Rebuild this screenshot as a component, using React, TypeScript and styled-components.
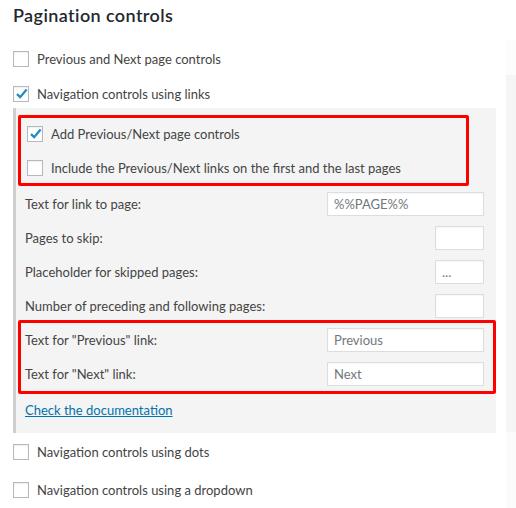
import React, { FC } from 'react';
import styled, { createGlobalStyle } from 'styled-components';

const GlobalStyle = createGlobalStyle`
  body {
    margin: 0;
    background: #ffffff;
    font-family: Lato, "Noto Sans", sans-serif;
    font-size: 13px;
    color: #444444;
  }
`;

const Page = styled.div`
  display: flex;
  width: 516px;
  height: 508px;
  overflow: hidden;
`;

const Main = styled.div`
  width: 483px;
  padding-left: 13px;
  flex-shrink: 0;
`;

const Title = styled.h2`
  margin: 0;
  padding-top: 4px;
  height: 40px;
  box-sizing: border-box;
  font-size: 18px;
  letter-spacing: 0.4px;
  line-height: 22px;
  font-weight: 600;
  color: #23282d;
`;

const OptionRow = styled.label<{ $height?: number }>`
  display: flex;
  align-items: center;
  gap: 8px;
  height: ${(p) => p.$height ?? 24}px;
  line-height: 18px;
  color: #444444;
`;

const TopOptions = styled.div`
  display: flex;
  flex-direction: column;
  gap: 11px;
  padding-top: 7px;
`;

const Box = styled.span`
  position: relative;
  width: 16px;
  height: 16px;
  box-sizing: border-box;
  border: 1px solid #b4b9be;
  background: #ffffff;
  box-shadow: inset 0 1px 2px rgba(0, 0, 0, 0.07);
  flex-shrink: 0;
`;

const Tick = styled.svg`
  position: absolute;
  left: 0;
  top: -1px;
`;

const Checkbox: FC<{ checked?: boolean }> = ({ checked }) => (
  <Box>
    {checked && (
      <Tick width="16" height="16" viewBox="0 0 16 16">
        <path d="M3 8.2 L6.2 11.2 L12.6 3.6" fill="none" stroke="#1e8cbe" strokeWidth="2.3" />
      </Tick>
    )}
  </Box>
);

const Panel = styled.div`
  margin-top: 2px;
  background: #f4f4f4;
  border-left: 3px solid #cfcfcf;
  padding: 7px 0 14px 2px;
`;

const Highlight = styled.div<{ $width?: number }>`
  border: 3px solid #ff0000;
  border-radius: 2px;
  width: ${(p) => (p.$width ? `${p.$width}px` : 'auto')};
  box-sizing: border-box;
`;

const CheckGroup = styled.div`
  display: flex;
  flex-direction: column;
  gap: 3px;
  padding: 0 6px;
`;

const Fields = styled.div<{ $pad: string }>`
  display: flex;
  flex-direction: column;
  gap: 10px;
  padding: ${(p) => p.$pad};
`;

const FieldRow = styled.div`
  display: flex;
  align-items: center;
  justify-content: space-between;
  height: 24px;
  color: #444444;
`;

const Input = styled.div<{ $width: number }>`
  width: ${(p) => p.$width}px;
  height: 24px;
  box-sizing: border-box;
  border: 1px solid #dddddd;
  background: #ffffff;
  box-shadow: inset 0 1px 2px rgba(0, 0, 0, 0.04);
  padding: 0 6px;
  line-height: 22px;
  font-size: 13px;
  color: #72777c;
`;

const DocLink = styled.a`
  display: block;
  margin: 7px 0 0 7px;
  line-height: 18px;
  color: #0073aa;
  text-decoration: underline;
`;

const BottomOptions = styled.div`
  display: flex;
  flex-direction: column;
`;

const Side = styled.div`
  margin-left: 10px;
  margin-top: 40px;
  flex: 1;
  display: flex;
  flex-direction: column;
`;

const SideHead = styled.div`
  height: 35px;
  background: #fcfcfc;
`;

const SideBody = styled.div`
  height: 357px;
  background: #f5f5f5;
`;

const SideFoot = styled.div`
  flex: 1;
  background: #fbfbfb;
`;

const fields = [
  { label: 'Text for link to page:', value: '%%PAGE%%', width: 157 },
  { label: 'Pages to skip:', value: '', width: 49 },
  { label: 'Placeholder for skipped pages:', value: '...', width: 49 },
  { label: 'Number of preceding and following pages:', value: '', width: 49 }
];

const linkFields = [
  { label: 'Text for "Previous" link:', value: 'Previous' },
  { label: 'Text for "Next" link:', value: 'Next' }
];

export default function App() {
  return (
    <Page>
      <GlobalStyle />
      <Main>
        <Title>Pagination controls</Title>
        <TopOptions>
          <OptionRow>
            <Checkbox />
            Previous and Next page controls
          </OptionRow>
          <OptionRow>
            <Checkbox checked />
            Navigation controls using links
          </OptionRow>
        </TopOptions>
        <Panel>
          <Highlight $width={451}>
            <CheckGroup>
              <OptionRow $height={31}>
                <Checkbox checked />
                Add Previous/Next page controls
              </OptionRow>
              <OptionRow $height={31}>
                <Checkbox />
                Include the Previous/Next links on the first and the last pages
              </OptionRow>
            </CheckGroup>
          </Highlight>
          <Fields $pad="6px 12px 2px 7px">
            {fields.map((f) => (
              <FieldRow key={f.label}>
                <span>{f.label}</span>
                <Input $width={f.width}>{f.value}</Input>
              </FieldRow>
            ))}
          </Fields>
          <Highlight>
            <Fields $pad="5px 9px 5px 4px">
              {linkFields.map((f) => (
                <FieldRow key={f.label}>
                  <span>{f.label}</span>
                  <Input $width={157}>{f.value}</Input>
                </FieldRow>
              ))}
            </Fields>
          </Highlight>
          <DocLink href="#">Check the documentation</DocLink>
        </Panel>
        <BottomOptions>
          <OptionRow $height={38}>
            <Checkbox />
            Navigation controls using dots
          </OptionRow>
          <OptionRow $height={38}>
            <Checkbox />
            Navigation controls using a dropdown
          </OptionRow>
        </BottomOptions>
      </Main>
      <Side>
        <SideHead />
        <SideBody />
        <SideFoot />
      </Side>
    </Page>
  );
}
